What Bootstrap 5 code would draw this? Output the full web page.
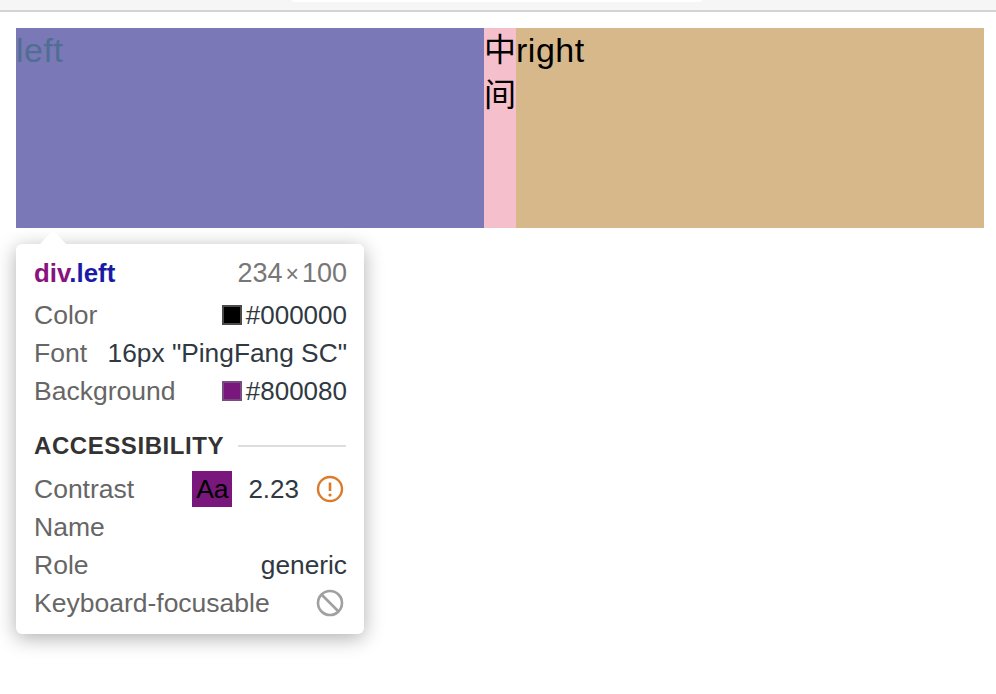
<!DOCTYPE html>
<html lang="zh">
<head>
<meta charset="utf-8">
<title>div.left</title>
<link href="https://cdn.jsdelivr.net/npm/bootstrap@5.3.0/dist/css/bootstrap.min.css" rel="stylesheet">
<style>
html,body{height:694px;overflow:hidden}
body{background:#fff;font-family:"Liberation Sans","Noto Sans CJK SC",sans-serif;color:#000}
.chrome-bar{height:12px;background:#f6f6f6;border-bottom:2px solid #d3d3d3}
.chrome-tab{width:410px;margin-left:292px;height:2px;background:#fff;border-bottom-left-radius:2px;border-bottom-right-radius:2px}
.stage{position:relative;padding:16px 12px 0 16px}
.demo-row{height:200px;font-size:32px;line-height:44px}
.pane-left{width:468px;background:#7a78b6;color:#4f6f92;font-size:34px;letter-spacing:.5px}
.pane-mid{width:32px;background:#f5c0cb;line-height:45px}
.pane-right{width:468px;background:#d7b88b;font-size:34px;letter-spacing:.5px}
.inspect-tip{position:absolute;left:16px;top:232px;width:348px;height:390px;background:#fff;border-radius:6px;box-shadow:0 4px 20px rgba(0,0,0,.32);padding:14px 17px 0 18px;font-size:26.5px;color:#303942}
.inspect-arrow{position:absolute;left:24px;top:-14px;width:0;height:0;border-left:13px solid transparent;border-right:13px solid transparent;border-bottom:14px solid #fff}
.tip-row{height:38px;line-height:38px;white-space:nowrap}
.tip-label{color:#666}
.tip-value{font-size:26.3px}
.hex-value{font-size:26px}
.tip-head{height:30px;line-height:30px;margin-bottom:8px;font-size:25.8px}
.tag-name{color:#881280;font-weight:700}
.class-name{color:#1a1aa6;font-weight:700}
.dims{color:#777;font-size:27px;line-height:32px}
.dims-x{font-size:23px;margin:0 3px}
.swatch{width:20px;height:20px;margin-right:4px;border:2px solid #4a4a4a;flex:none}
.swatch-black{background:#000}
.swatch-purple{background:#7a177c;border-color:#7a4d80}
.section-head{margin-top:17px;margin-bottom:5px;margin-right:1px;height:38px;font-size:24px;font-weight:700;color:#333;letter-spacing:.57px;line-height:38px}
.section-line{height:2px;background:#ddd;margin-left:14px}
.aa-chip{width:40px;height:36px;line-height:36px;background:#7a177c;color:#000;text-align:center;margin-right:16px;font-size:26.5px}
.contrast-val{margin-right:17px;font-size:26px}
.status-icon{width:28px;height:28px;margin-right:3px;flex:none;display:block}
</style>
</head>
<body>
<div class="chrome-bar"><div class="chrome-tab"></div></div>
<div class="stage">
  <div class="d-flex demo-row">
    <div class="pane-left">left</div>
    <div class="pane-mid">中间</div>
    <div class="pane-right">right</div>
  </div>
  <div class="inspect-tip">
    <div class="inspect-arrow"></div>
    <div class="d-flex justify-content-between align-items-center tip-head">
      <div><span class="tag-name">div</span><span class="class-name">.left</span></div>
      <div class="dims">234<span class="dims-x">×</span>100</div>
    </div>
    <div class="d-flex justify-content-between align-items-center tip-row">
      <span class="tip-label">Color</span>
      <span class="d-flex align-items-center hex-value"><span class="swatch swatch-black"></span>#000000</span>
    </div>
    <div class="d-flex justify-content-between align-items-center tip-row">
      <span class="tip-label">Font</span>
      <span class="tip-value">16px "PingFang SC"</span>
    </div>
    <div class="d-flex justify-content-between align-items-center tip-row">
      <span class="tip-label">Background</span>
      <span class="d-flex align-items-center hex-value"><span class="swatch swatch-purple"></span>#800080</span>
    </div>
    <div class="d-flex align-items-center section-head">
      <span>ACCESSIBILITY</span><span class="section-line flex-grow-1"></span>
    </div>
    <div class="d-flex justify-content-between align-items-center tip-row">
      <span class="tip-label">Contrast</span>
      <span class="d-flex align-items-center">
        <span class="aa-chip">Aa</span><span class="contrast-val">2.23</span>
        <svg class="status-icon" viewBox="0 0 28 28" fill="none" aria-hidden="true"><circle cx="14" cy="14" r="12" stroke="#dc7a2a" stroke-width="2.4"/><path d="M14 7.5v8.5" stroke="#dc7a2a" stroke-width="2.6"/><circle cx="14" cy="20" r="1.6" fill="#dc7a2a"/></svg>
      </span>
    </div>
    <div class="tip-row"><span class="tip-label">Name</span></div>
    <div class="d-flex justify-content-between align-items-center tip-row">
      <span class="tip-label">Role</span>
      <span class="tip-value">generic</span>
    </div>
    <div class="d-flex justify-content-between align-items-center tip-row">
      <span class="tip-label">Keyboard-focusable</span>
      <svg class="status-icon" viewBox="0 0 28 28" fill="none" aria-hidden="true"><circle cx="14" cy="14" r="12" stroke="#a0a0a0" stroke-width="2.6"/><path d="M5.5 5.5l17 17" stroke="#a0a0a0" stroke-width="2.6"/></svg>
    </div>
  </div>
</div>
<script src="https://cdn.jsdelivr.net/npm/bootstrap@5.3.0/dist/js/bootstrap.bundle.min.js"></script>
</body>
</html>
